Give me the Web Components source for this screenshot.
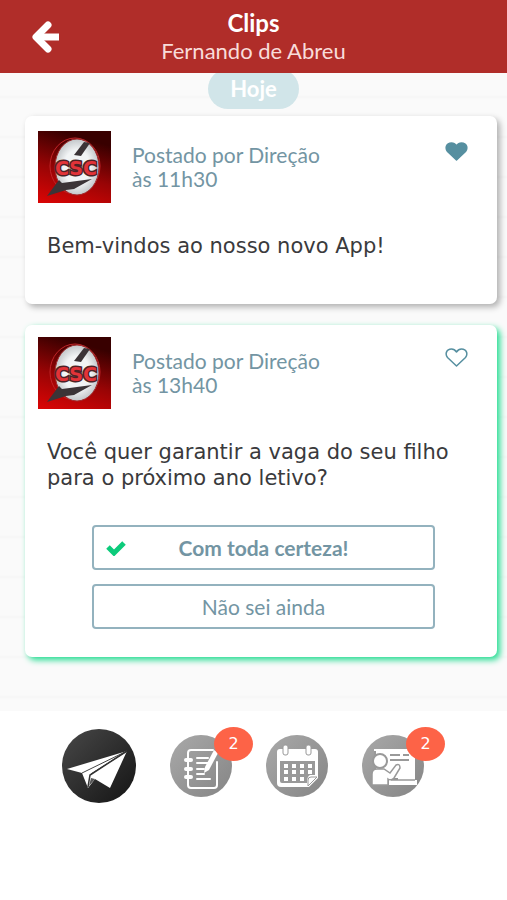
<!DOCTYPE html>
<html lang="pt-BR">
<head>
<meta charset="utf-8">
<meta name="viewport" content="width=device-width, initial-scale=1">
<title>Clips</title>
<style>
    body {
        margin: 0;
        background: #fff;
        font-family: Lato, sans-serif;
        color: #3a3a3c;
    }
</style>
</head>
<body>
<app-header>
    <span slot="title">Clips</span>
    <span slot="subtitle">Fernando de Abreu</span>
</app-header>

<clip-feed>
    <day-pill>Hoje</day-pill>
    <clip-card data-liked>
        <span slot="author">Postado por Direção</span>
        <span slot="time">às 11h30</span>
        Bem-vindos ao nosso novo App!
    </clip-card>
    <clip-card data-highlight>
        <span slot="author">Postado por Direção</span>
        <span slot="time">às 13h40</span>
        Você quer garantir a vaga do seu filho para o próximo ano letivo?
        <poll-option slot="options" data-selected>Com toda certeza!</poll-option>
        <poll-option slot="options">Não sei ainda</poll-option>
    </clip-card>
</clip-feed>

<tab-bar>
    <tab-item data-icon="plane" data-label="Clips" data-active></tab-item>
    <tab-item data-icon="notebook" data-label="Agenda">2</tab-item>
    <tab-item data-icon="calendar" data-label="Calendário"></tab-item>
    <tab-item data-icon="teacher" data-label="Aulas">2</tab-item>
</tab-bar>

<script>
    const icons = {
        plane: `
            <path fill="#fff" d="M5 40 65 22 48 59 33 50 26 59 20 44Z"/>
            <path fill="none" stroke="#444" stroke-width="1" d="M20 44 65 22 29 45"/>
            <path fill="none" stroke="#333" stroke-width="1.500" d="M65 22 28 46 26 58"/>
            <path fill="#555" d="M29 49 33 50 27 57Z"/>`,
        notebook: `
            <g fill="none" stroke="#fff" stroke-width="2" stroke-linecap="round">
                <path d="M43 15H21q-3 0-3 3v32q0 3 3 3h23q3 0 3-3V27"/>
                <path d="M16 25h5M16 34h5M16 42h5" stroke-width="4"/>
                <path d="M27 23h11M27 28h11M27 34h7M27 39h7M27 44h13"/>
            </g>
            <path fill="#fff" d="M44 15 48 18 39 35 34 38 35 32Z"/>`,
        calendar: `
            <path fill="#fff" d="M14 14H49Q52 14 52 17V43L43 52H15Q11 52 11 48V17Q11 14 14 14Z"/>
            <path fill="#999" d="M14 26H49V40H44Q41 41 41 48H16Q14 48 14 46Z"/>
            <path fill="#fff" stroke="#999" stroke-width="1" d="M42 51V45Q42 42 45 42H51Z"/>
            <g fill="#fff" stroke="#999"><rect x="17" y="10" width="5" height="10" rx="2"/><rect x="40" y="10" width="5" height="10" rx="2"/></g>
            <path stroke="#fff" stroke-width="4" stroke-dasharray="4 4" d="M18 31H46M18 37H46M18 44H40"/>`,
        teacher: `
            <path fill="#fff" d="M12 14H53V45H55V50H27V45H36V43H12Z"/>
            <path fill="#999" d="M12 16H14V43H12Z"/>
            <path stroke="#999" stroke-width="2" d="M28 20H38M41 20H47M28 25H47"/>
            <circle cx="18" cy="26" r="7" fill="#fff" stroke="#999" stroke-width="2"/>
            <path fill="#fff" stroke="#999" stroke-width="1.500" d="M10 50V39Q10 34 15 34H22L28 38 34 30Q38 28 38 33L32 43Q29 46 26 44V50Z"/>
            <path stroke="#999" stroke-width="1.500" d="M29 45H53"/>`
    };

    class AppHeader extends HTMLElement {
        connectedCallback() {
            this.attachShadow({ mode: 'open' });
            this.shadowRoot.innerHTML = `
                <style>
                    :host {
                        display: block;
                        position: relative;
                        z-index: 1;
                        background: #b02d29;
                        color: #fff;
                    }
                    header {
                        display: grid;
                        grid-template-columns: 90px 1fr 90px;
                        align-items: center;
                        height: 73px;
                        text-align: center;
                    }
                    button {
                        justify-self: center;
                        padding: 0;
                        border: 0;
                        background: none;
                    }
                    svg { display: block; }
                    h1, p {
                        margin: 0;
                        font-size: 24px;
                        line-height: 28px;
                    }
                    p {
                        color: #f8dcda;
                        font-size: 22px;
                    }
                </style>
                <header>
                    <button type="button" aria-label="Voltar">
                        <svg width="30" height="34" viewBox="0 0 30 34" fill="none" stroke="#fff" stroke-width="7">
                            <path d="M6 17H29"/>
                            <path d="M18 5 6 17 18 29" stroke-linecap="round" stroke-linejoin="round"/>
                        </svg>
                    </button>
                    <div>
                        <h1><slot name="title"></slot></h1>
                        <p><slot name="subtitle"></slot></p>
                    </div>
                </header>
            `;
        }
    }
    customElements.define('app-header', AppHeader);

    class ClipFeed extends HTMLElement {
        connectedCallback() {
            this.attachShadow({ mode: 'open' });
            this.shadowRoot.innerHTML = `
                <style>
                    :host {
                        display: block;
                        background: repeating-linear-gradient(#fafafa 0 22px, #f6f6f6 24px, #fafafa 26px 40px);
                    }
                    main {
                        display: flex;
                        flex-direction: column;
                        gap: 21px;
                        padding: 0 10px 54px 25px;
                    }
                </style>
                <main><slot></slot></main>
            `;
        }
    }
    customElements.define('clip-feed', ClipFeed);

    class DayPill extends HTMLElement {
        connectedCallback() {
            this.attachShadow({ mode: 'open' });
            this.shadowRoot.innerHTML = `
                <style>
                    :host {
                        display: block;
                        align-self: center;
                        margin: -4px 15px -14px 0;
                        padding: 0 22px;
                        border-radius: 20px;
                        background: #d1e5e9;
                        color: #fff;
                        font-size: 22px;
                        font-weight: bold;
                        line-height: 40px;
                    }
                </style>
                <slot></slot>
            `;
        }
    }
    customElements.define('day-pill', DayPill);

    class SchoolLogo extends HTMLElement {
        connectedCallback() {
            this.attachShadow({ mode: 'open' });
            this.shadowRoot.innerHTML = `
                <style>
                    :host { display: block; }
                    svg { display: block; }
                    text {
                        font: bold 19px "DejaVu Sans", sans-serif;
                        text-anchor: middle;
                        paint-order: stroke;
                    }
                </style>
                <svg width="73" height="72" viewBox="0 0 73 72" role="img" aria-label="CSC">
                    <defs>
                        <linearGradient id="bg" x1="0.3" y1="0" x2="0" y2="1">
                            <stop offset="0" stop-color="#380000"/>
                            <stop offset="0.5" stop-color="#980405"/>
                            <stop offset="1" stop-color="#dc0505"/>
                        </linearGradient>
                        <radialGradient id="disc">
                            <stop offset="0.6" stop-color="#f2f4f5"/>
                            <stop offset="1" stop-color="#c3c7ca"/>
                        </radialGradient>
                    </defs>
                    <rect width="73" height="72" fill="url(#bg)"/>
                    <ellipse cx="37" cy="35" rx="25" ry="28" fill="none" stroke="#c22529" stroke-width="1"/>
                    <ellipse cx="39" cy="36" rx="22" ry="28" fill="url(#disc)" stroke="#a02b2d" stroke-width="1"/>
                    <path fill="#3b3437" d="M46 11 52 12 43 25 36 24Z"/>
                    <path fill="#3b3437" d="M9 65 21 49 24 52 54 48 36 58 28 59Z"/>
                    <text x="38" y="44" fill="#e23338" stroke="#4d2226" stroke-width="3">CSC</text>
                </svg>
            `;
        }
    }
    customElements.define('school-logo', SchoolLogo);

    class ClipCard extends HTMLElement {
        connectedCallback() {
            const liked = this.hasAttribute('data-liked');

            this.attachShadow({ mode: 'open' });
            this.shadowRoot.innerHTML = `
                <style>
                    :host {
                        display: block;
                        padding: 15px 29px 45px 13px;
                        border-radius: 7px;
                        background: #fff;
                        box-shadow: 3px 3px 6px rgba(0, 0, 0, 0.3);
                    }
                    :host([data-highlight]) {
                        padding-top: 12px;
                        padding-bottom: 28px;
                        box-shadow: 3px 3px 6px #20dc90;
                    }
                    .top {
                        display: flex;
                        align-items: center;
                        gap: 21px;
                        color: #7395a3;
                        font-size: 21px;
                        line-height: 24px;
                    }
                    .meta { flex: 1; }
                    .meta slot { display: block; }
                    .like {
                        align-self: flex-start;
                        margin-top: 10px;
                        padding: 0;
                        border: 0;
                        background: none;
                    }
                    .like svg { display: block; }
                    .message {
                        margin: 30px 0 0 9px;
                        font: 21px/26px "DejaVu Sans", sans-serif;
                    }
                    .options {
                        display: grid;
                        gap: 14px;
                        margin: 34px 33px 0 54px;
                    }
                    :host(:not([data-highlight])) .options { display: none; }
                </style>
                <article>
                    <div class="top">
                        <school-logo></school-logo>
                        <div class="meta">
                            <slot name="author"></slot>
                            <slot name="time"></slot>
                        </div>
                        <button class="like" type="button" aria-label="Curtir" aria-pressed="${liked}">
                            <svg width="23" height="21" viewBox="0 0 23 21" fill="${liked ? '#568fa0' : 'none'}" stroke="#568fa0" stroke-width="1.500" stroke-linejoin="round">
                                <path d="M11.500 19 2.500 10.500C0 7.500 1 2 6.500 2 9 2 10.500 3.500 11.500 5 12.500 3.500 14 2 16.500 2 22 2 23 7.500 20.500 10.500Z"/>
                            </svg>
                        </button>
                    </div>
                    <div class="message"><slot></slot></div>
                    <div class="options"><slot name="options"></slot></div>
                </article>
            `;
        }
    }
    customElements.define('clip-card', ClipCard);

    class PollOption extends HTMLElement {
        connectedCallback() {
            const selected = this.hasAttribute('data-selected');

            this.attachShadow({ mode: 'open' });
            this.shadowRoot.innerHTML = `
                <style>
                    :host { display: block; }
                    button {
                        display: grid;
                        grid-template-columns: 20px 1fr 20px;
                        align-items: center;
                        width: 100%;
                        height: 45px;
                        padding: 0 12px;
                        border: 2px solid #93b2be;
                        border-radius: 4px;
                        background: #fff;
                        color: #7395a3;
                        font: 21px/24px Lato, sans-serif;
                    }
                    :host([data-selected]) button { font-weight: bold; }
                    .label { grid-column: 2; }
                </style>
                <button type="button" aria-pressed="${selected}">
                    ${selected ? `
                        <svg width="20" height="16" viewBox="0 0 20 16" fill="none" stroke="#0ccb7b" stroke-width="5">
                            <path d="M2 7 8 13 18 3"/>
                        </svg>` : ''}
                    <span class="label"><slot></slot></span>
                </button>
            `;
        }
    }
    customElements.define('poll-option', PollOption);

    class TabBar extends HTMLElement {
        connectedCallback() {
            this.attachShadow({ mode: 'open' });
            this.shadowRoot.innerHTML = `
                <style>
                    :host { display: block; background: #fff; }
                    nav {
                        display: flex;
                        justify-content: center;
                        align-items: center;
                        gap: 34px;
                        padding: 18px 21px 18px 0;
                    }
                </style>
                <nav><slot></slot></nav>
            `;
        }
    }
    customElements.define('tab-bar', TabBar);

    class TabItem extends HTMLElement {
        connectedCallback() {
            const active = this.hasAttribute('data-active');
            const count = this.textContent.trim();
            const size = active ? 74 : 62;

            this.attachShadow({ mode: 'open' });
            this.shadowRoot.innerHTML = `
                <style>
                    :host { display: block; }
                    a {
                        display: block;
                        position: relative;
                        color: #fff;
                        text-decoration: none;
                    }
                    svg { display: block; }
                    .badge {
                        position: absolute;
                        top: -8px;
                        right: -21px;
                        width: 39px;
                        border-radius: 50%;
                        background: #fd6347;
                        font: 16px/34px "DejaVu Sans", sans-serif;
                        text-align: center;
                    }
                </style>
                <a href="#" aria-label="${this.dataset.label}">
                    <svg width="${size}" height="${size}" viewBox="0 0 ${size} ${size}">
                        <linearGradient id="fill" x1="0" y1="0" x2="1" y2="1">
                            <stop offset="0" stop-color="${active ? '#484848' : '#a9a9a9'}"/>
                            <stop offset="1" stop-color="${active ? '#141414' : '#858585'}"/>
                        </linearGradient>
                        <circle cx="${size / 2}" cy="${size / 2}" r="${size / 2}" fill="url(#fill)"/>
                        ${icons[this.dataset.icon]}
                    </svg>
                    ${count ? '<span class="badge"><slot></slot></span>' : ''}
                </a>
            `;
        }
    }
    customElements.define('tab-item', TabItem);
</script>
</body>
</html>
